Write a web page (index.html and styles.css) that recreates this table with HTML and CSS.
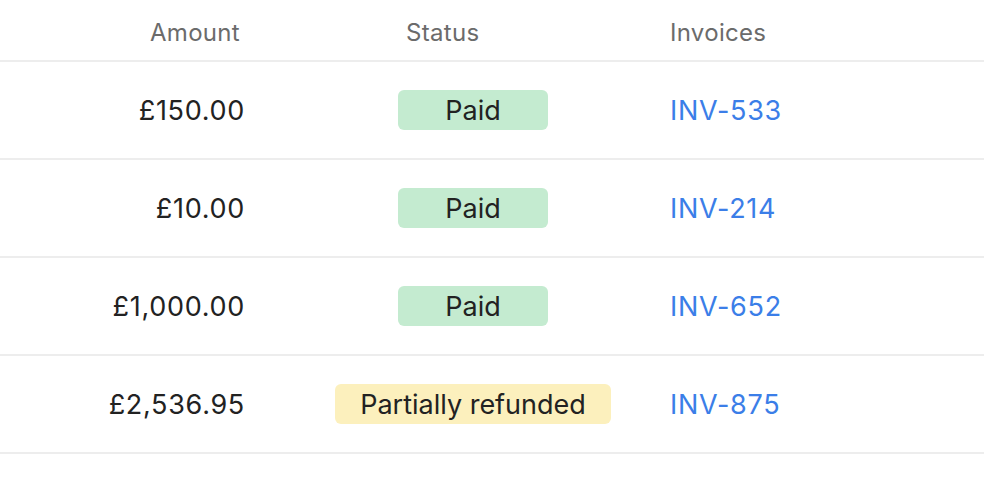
FILE: index.html
```html
<!DOCTYPE html>
<html>
<head>
<meta charset="utf-8">
<link rel="stylesheet" href="styles.css">
</head>
<body>
<div class="table">
  <div class="row head">
    <div class="c-amount">Amount</div>
    <div class="c-status"><span class="status-label">Status</span></div>
    <div class="c-inv">Invoices</div>
  </div>
  <div class="row">
    <div class="c-amount">£150.00</div>
    <div class="c-status"><span class="badge paid">Paid</span></div>
    <div class="c-inv"><a href="#">INV-533</a></div>
  </div>
  <div class="row">
    <div class="c-amount">£10.00</div>
    <div class="c-status"><span class="badge paid">Paid</span></div>
    <div class="c-inv"><a href="#">INV-214</a></div>
  </div>
  <div class="row">
    <div class="c-amount">£1,000.00</div>
    <div class="c-status"><span class="badge paid">Paid</span></div>
    <div class="c-inv"><a href="#">INV-652</a></div>
  </div>
  <div class="row">
    <div class="c-amount">£2,536.95</div>
    <div class="c-status"><span class="badge refunded">Partially refunded</span></div>
    <div class="c-inv"><a href="#">INV-875</a></div>
  </div>
</div>
</body>
</html>
```
FILE: styles.css
```css
html, body {
  margin: 0;
  padding: 0;
  background: #ffffff;
}
body {
  font-family: Inter, "Noto Sans", sans-serif;
  color: #222222;
}
.table {
  display: flex;
  flex-direction: column;
}
.row {
  display: grid;
  grid-template-columns: 276px 394px 1fr;
  align-items: center;
  height: 96px;
  border-bottom: 2px solid #ededed;
  font-size: 27px;
}
.row.head {
  height: 60px;
  padding-top: 4px;
  padding-bottom: 0;
  box-sizing: content-box;
  height: 56px;
  font-size: 24px;
  letter-spacing: 0.3px;
  color: #6b6b6b;
}
.c-amount {
  text-align: right;
  padding-right: 31px;
  letter-spacing: 0.7px;
}
.head .c-amount {
  padding-right: 36px;
  letter-spacing: 0.3px;
}
.c-status {
  display: flex;
  justify-content: center;
}
.head .c-status {
  justify-content: flex-start;
  padding-left: 130px;
}
.c-inv a {
  color: #3b7ee8;
  text-decoration: none;
  letter-spacing: 0.7px;
}
.badge {
  display: inline-flex;
  align-items: center;
  justify-content: center;
  min-width: 150px;
  height: 40px;
  box-sizing: border-box;
  padding: 0 25px;
  border-radius: 6px;
}
.badge.paid {
  background: #c4ebd0;
}
.badge.refunded {
  background: #fcf0bd;
}
```
